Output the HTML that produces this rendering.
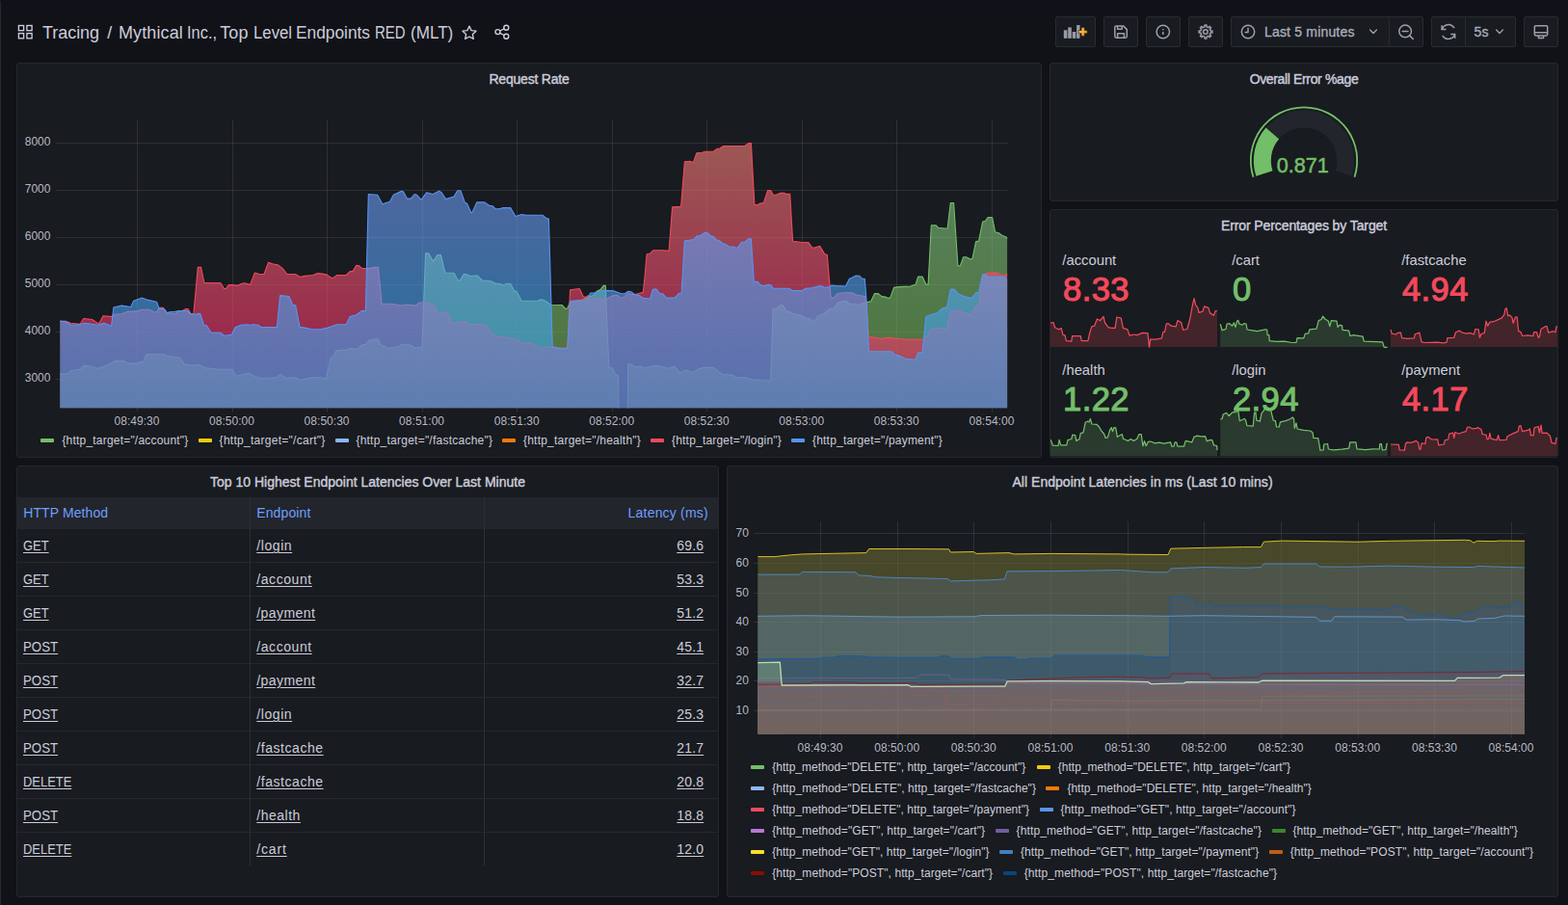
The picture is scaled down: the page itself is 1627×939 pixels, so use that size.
<!DOCTYPE html>
<html lang="en"><head><meta charset="utf-8"><title>Mythical Inc., Top Level Endpoints RED (MLT) - Grafana</title>
<style>
html,body{margin:0;padding:0}
body{width:1627px;height:939px;overflow:hidden;background:#111217;color:#ccccdc;font-family:"Liberation Sans",sans-serif;font-size:14px;position:relative}
.edge{position:absolute;left:0;top:1px;width:1px;height:938px;background:#25282f}
.edget{position:absolute;left:0;top:0;width:1627px;height:1px;background:#0e121d}
.panel{position:absolute;box-sizing:border-box;background:#181b1f;border:1px solid #25272c;border-radius:3px;overflow:hidden}
.ptitle{position:absolute;left:0;right:0;top:7px;height:18px;line-height:18px;text-align:center;font-size:14px;color:#ccccdc;letter-spacing:-.2px;white-space:nowrap;-webkit-text-stroke:.4px #ccccdc}
.chart{position:absolute;left:-1px;top:-1px}
.ax text{font-family:"Liberation Sans",sans-serif;font-size:12px;fill:#ccccdc;fill-opacity:.9;letter-spacing:.03px}
.dash{position:absolute;width:14px;height:4px;border-radius:1px}
.lg{position:absolute;font-size:12px;line-height:16px;white-space:nowrap;color:#ccccdc}
.tb{position:absolute;top:17px;height:32px;box-sizing:border-box;border:1px solid #292b30;border-radius:2px;background:#181b1f}
.tb svg{position:absolute}
.tbt{position:absolute;font-size:14px;color:#a9abbb;white-space:nowrap;line-height:30px;top:0;letter-spacing:.1px;-webkit-text-stroke:.35px #a9abbb}
.ttl{position:absolute;top:23px;font-size:18px;line-height:22px;color:#ccccdc;white-space:nowrap}
.stt{position:absolute;font-size:14.8px;line-height:17px;color:#ccccdc;white-space:nowrap}
.stv{position:absolute;font-size:34.5px;line-height:36px;letter-spacing:.4px;white-space:nowrap;-webkit-text-stroke:1.1px currentColor}
.th{position:absolute;font-size:14px;line-height:20px;color:#6e9fff;white-space:nowrap}
.td{position:absolute;font-size:14px;line-height:20px;color:#ccccdc;white-space:nowrap;text-decoration:underline;text-underline-offset:2px;text-decoration-thickness:1px}
.r{text-align:right}

</style></head>
<body>
<div class="edge"></div><div class="edget"></div>
<!-- page toolbar -->
<svg style="position:absolute;left:0;top:0" width="560" height="60" viewBox="0 0 560 60" fill="none" stroke="#ccccdc" stroke-width="1.35" stroke-linejoin="round" stroke-linecap="round">
  <g stroke-linejoin="miter">
    <rect x="19.4" y="26.5" width="5.2" height="5.2"/><rect x="27.9" y="26.5" width="5.2" height="5.2"/>
    <rect x="19.4" y="34.6" width="5.2" height="5.2"/><rect x="27.9" y="34.6" width="5.2" height="5.2"/>
  </g>
  <path d="M487 27.1 L489.1 31.6 L494 32.2 L490.4 35.6 L491.3 40.4 L487 38 L482.7 40.4 L483.6 35.6 L480 32.2 L484.9 31.6 Z"/>
  <circle cx="525.3" cy="28.7" r="2.5"/><circle cx="516.5" cy="33.1" r="2.5"/><circle cx="525.3" cy="37.7" r="2.5"/>
  <path d="M518.8 32 L523 29.8 M518.8 34.3 L523 36.5"/>
</svg>
<div class="ttl" style="left:44px;letter-spacing:-.05px">Tracing</div>
<div class="ttl" style="left:111.5px"><span style="position:absolute;left:-0.2px">/</span> <span style="position:absolute;left:11.4px;letter-spacing:0.123px">Mythical</span> <span style="position:absolute;left:82.2px;display:inline-block;transform-origin:0 50%;transform:scaleX(0.9114)">Inc.,</span> <span style="position:absolute;left:116.8px;letter-spacing:0.060px">Top</span> <span style="position:absolute;left:151.2px;display:inline-block;transform-origin:0 50%;transform:scaleX(0.9319)">Level</span> <span style="position:absolute;left:195.7px;display:inline-block;transform-origin:0 50%;transform:scaleX(0.9618)">Endpoints</span> <span style="position:absolute;left:277.5px;display:inline-block;transform-origin:0 50%;transform:scaleX(0.8341)">RED</span> <span style="position:absolute;left:314.3px;display:inline-block;transform-origin:0 50%;transform:scaleX(0.9496)">(MLT)</span></div>

<div class="tb" style="left:1095px;width:42px">
  <svg style="left:7px;top:7px" width="26" height="16" viewBox="1103 25 26 16">
    <defs><linearGradient id="pl" x1="0" y1="0" x2="1" y2="1"><stop offset="0" stop-color="#ffd84a"/><stop offset="1" stop-color="#ff8418"/></linearGradient></defs>
    <rect x="1103.8" y="31.3" width="3.6" height="8.5" fill="#9a9ba8"/><rect x="1108.2" y="28.4" width="3.6" height="11.4" fill="#9a9ba8"/>
    <rect x="1112.7" y="33" width="3.6" height="6.8" fill="#9a9ba8"/><rect x="1117.1" y="26" width="3.4" height="13.8" fill="#9a9ba8"/>
    <path d="M1122.1 28.6h3.2v2.9h2.9v3.2h-2.9v2.9h-3.2v-2.9h-2.9v-3.2h2.9z" fill="url(#pl)" stroke="#181b1f" stroke-width=".6"/>
  </svg>
</div>
<div class="tb" style="left:1145px;width:36px">
  <svg style="left:9px;top:7px" width="16" height="16" viewBox="1155 25 16 16" fill="none" stroke="#9d9eab" stroke-width="1.5" stroke-linejoin="round">
    <path d="M1158.2 26.9h7.4l3.7 3.7v7.2a1.4 1.4 0 0 1-1.4 1.4h-9.7a1.4 1.4 0 0 1-1.4-1.4v-9.5a1.4 1.4 0 0 1 1.4-1.4z"/>
    <path d="M1159.6 27v3.3h4.6v-3.3M1159.6 39v-4.2h6.8v4.2"/>
  </svg>
</div>
<div class="tb" style="left:1189px;width:36px">
  <svg style="left:9px;top:7px" width="16" height="16" viewBox="1199 25 16 16" fill="none" stroke="#9d9eab" stroke-width="1.5" stroke-linecap="round">
    <circle cx="1206.8" cy="33" r="6.7"/><path d="M1206.8 33v3" stroke-linecap="butt"/><path d="M1206.8 30.1v1.2" stroke-linecap="butt"/>
  </svg>
</div>
<div class="tb" style="left:1233px;width:36px">
  <svg style="left:9px;top:7px" width="16" height="16" viewBox="-8 -8 16 16" fill="none" stroke="#9d9eab" stroke-width="1.5" stroke-linejoin="round">
    <circle cx="-.1" cy="0" r="2.3"/>
    <path d="M-1.06 -5.09 L-0.97 -6.93 L0.97 -6.93 L1.06 -5.09 L2.85 -4.35 L4.22 -5.59 L5.59 -4.22 L4.35 -2.85 L5.09 -1.06 L6.93 -0.97 L6.93 0.97 L5.09 1.06 L4.35 2.85 L5.59 4.22 L4.22 5.59 L2.85 4.35 L1.06 5.09 L0.97 6.93 L-0.97 6.93 L-1.06 5.09 L-2.85 4.35 L-4.22 5.59 L-5.59 4.22 L-4.35 2.85 L-5.09 1.06 L-6.93 0.97 L-6.93 -0.97 L-5.09 -1.06 L-4.35 -2.85 L-5.59 -4.22 L-4.22 -5.59 L-2.85 -4.35 Z"/>
  </svg>
</div>
<div class="tb" style="left:1277px;width:165px;border-radius:2px 0 0 2px">
  <svg style="left:9px;top:7px" width="16" height="16" viewBox="1287 25 16 16" fill="none" stroke="#9d9eab" stroke-width="1.5" stroke-linecap="round" stroke-linejoin="round">
    <circle cx="1295" cy="33" r="6.7"/><path d="M1295 29.2v4.2h-2.9"/>
  </svg>
  <span class="tbt" style="left:34px;letter-spacing:.18px">Last 5 minutes</span>
  <svg style="left:142px;top:11px" width="10" height="8" viewBox="0 0 10 8" fill="none" stroke="#9a9ba8" stroke-width="1.4" stroke-linecap="round" stroke-linejoin="round"><path d="M1.6 2l3.4 3.4L8.400 2"/></svg>
</div>
<div class="tb" style="left:1441px;width:36px;border-radius:0 2px 2px 0">
  <svg style="left:8px;top:6px" width="19" height="19" viewBox="1450 24 19 19" fill="none" stroke="#9d9eab" stroke-width="1.5" stroke-linecap="round">
    <circle cx="1458.1" cy="32.4" r="6.3"/><path d="M1455.200 32.4h5.800M1462.700 37l3.500 3.400"/>
  </svg>
</div>
<div class="tb" style="left:1485px;width:36px;border-radius:2px 0 0 2px">
  <svg style="left:8px;top:6px" width="18" height="18" viewBox="1494 24 18 18" fill="none" stroke="#9d9eab" stroke-width="1.5" stroke-linecap="round" stroke-linejoin="round">
    <path d="M1496.300 30.500a6.900 6.900 0 0 1 12.400-1.800M1509.500 35.500a6.900 6.900 0 0 1-12.400 1.800"/>
    <path d="M1496.100 26.700v3.900h3.900M1509.700 39.300v-3.900h-3.900"/>
  </svg>
</div>
<div class="tb" style="left:1520px;width:53px;border-radius:0 2px 2px 0">
  <span class="tbt" style="left:8.500px">5s</span>
  <svg style="left:30px;top:11px" width="10" height="8" viewBox="0 0 10 8" fill="none" stroke="#9a9ba8" stroke-width="1.4" stroke-linecap="round" stroke-linejoin="round"><path d="M1.600 2l3.400 3.400L8.400 2"/></svg>
</div>
<div class="tb" style="left:1581px;width:36px">
  <svg style="left:8px;top:7px" width="17" height="17" viewBox="1590 25 17 17" fill="none" stroke="#9d9eab" stroke-width="1.5" stroke-linejoin="round">
    <rect x="1592.300" y="26.700" width="13.400" height="10.200" rx="1.300"/><path d="M1592.300 33.800h13.400M1596.400 37v2.400h5.200v-2.400"/>
  </svg>
</div>
<div class="panel" style="left:17px;top:65px;width:1064px;height:410px"><div class="ptitle">Request Rate</div><svg class="chart" width="1064" height="410" viewBox="17 65 1064 410"><defs><linearGradient id="hg" gradientUnits="userSpaceOnUse" x1="0" y1="124" x2="0" y2="423.5"><stop offset="0" stop-color="rgb(141,206,150)" stop-opacity=".6"/><stop offset="1" stop-color="rgb(109,172,73)" stop-opacity=".6"/></linearGradient><linearGradient id="hr" gradientUnits="userSpaceOnUse" x1="0" y1="124" x2="0" y2="423.5"><stop offset="0" stop-color="rgb(245,138,121)" stop-opacity=".6"/><stop offset="1" stop-color="rgb(239,25,103)" stop-opacity=".6"/></linearGradient><linearGradient id="hp" gradientUnits="userSpaceOnUse" x1="0" y1="124" x2="0" y2="423.5"><stop offset="0" stop-color="rgb(134,150,246)" stop-opacity=".6"/><stop offset="1" stop-color="rgb(40,168,238)" stop-opacity=".6"/></linearGradient><clipPath id="c1"><rect x="62" y="124" width="983.6" height="299.5"/></clipPath></defs><path d="M142.5 124 V427.5 M241.5 124 V427.5 M339.5 124 V427.5 M438.5 124 V427.5 M536.5 124 V427.5 M635.5 124 V427.5 M733.5 124 V427.5 M832.5 124 V427.5 M930.5 124 V427.5 M1029.5 124 V427.5 M58 393.5 H1045.6 M58 344.5 H1045.6 M58 295.5 H1045.6 M58 246.5 H1045.6 M58 197.5 H1045.6 M58 148.5 H1045.6" stroke="#ccccdc" stroke-opacity=".12" stroke-width="1" fill="none"/><g clip-path="url(#c1)" stroke-linejoin="round"><path d="M62.3 388.1 L69.6 388.1 L73.4 384.8 L83 383.3 L86.8 379.4 L95.5 380.4 L101.2 382.3 L107.9 380.4 L114.7 377.1 L119.4 374.6 L129 374.6 L132.9 377.1 L142.5 377.1 L145.3 375.6 L148.6 375.6 L152 367.5 L169.3 367.5 L173.1 369.3 L186.6 371.2 L191.4 378.1 L200 379.4 L206.7 378.5 L211.5 381.4 L224.9 383.3 L241.2 383.3 L245 390.6 L250 389 L258.6 387.1 L263.4 390 L270.1 392.3 L278.8 392.3 L287.4 391.3 L291.2 388.1 L297 392.3 L305.6 391.5 L311.4 394.2 L322.9 391.9 L332.5 391.5 L338.2 392.9 L343.4 371.2 L345.9 370.8 L348.8 363.7 L358.3 363.1 L363.1 361.6 L370.8 362.2 L375.6 357.8 L379.4 357.4 L383.3 353 L391.9 351.6 L395.7 358 L402.4 361.2 L413 359.9 L415.9 357.8 L425.5 357.8 L429.3 360.3 L437.9 360.8 L441.6 262.8 L444.6 262.8 L449.7 271.3 L453.8 264.6 L457.4 264.6 L462 283.3 L471 283.3 L475.3 291 L477.3 291 L481.2 284.6 L483.7 284.6 L487.6 286.6 L495.2 285.8 L500.4 291 L509.3 291.7 L514.4 294.3 L518.2 294.3 L522.1 296.1 L525.9 294.3 L529.7 294.3 L533.6 301.9 L536.1 302.5 L541.2 312.2 L557.9 312.2 L560.4 310.9 L564.2 311.4 L565.8 312.3 L571.5 316.2 L583 316.5 L586.8 320.4 L588.8 320 L591.6 313.3 L604.1 311 L610.2 308.5 L615.6 306.6 L619.4 302.2 L623.3 300.2 L626.2 296.4 L628.3 296.4 L629.4 326.7 L631.9 381.4 L635.7 382.3 L638.6 389 L641.5 389 L641.9 427.4 L651.3 427.4 L651.7 377.5 L654.9 378.1 L658.8 380.8 L664.5 380 L669.3 381.9 L675.1 380.4 L679.8 379.4 L686.6 380.4 L692.3 382.3 L700 380.4 L705.7 387.1 L711.5 384.2 L719.2 386.1 L724.9 382.7 L730.7 381.4 L740.2 381.4 L750 388.6 L759.6 389 L763.4 391.5 L773 391.5 L782.6 394.2 L791.2 394.2 L797.9 395.3 L799.5 395.3 L802.2 320.6 L805.6 320.6 L809.4 316.7 L812.3 316.7 L816.2 323.4 L819 323.4 L823.8 325.7 L832.5 327.7 L836.3 330.5 L839.2 330.5 L844 333.4 L845.9 332.5 L848.8 327.7 L854.5 325.7 L861.2 320.6 L865.1 320 L868.9 314.2 L872.7 313.3 L877.5 312.3 L881.4 315.2 L890.9 316.2 L894.8 314.8 L899.2 313.7 L903.8 312.6 L907.5 304.6 L911.3 304.6 L915 307.6 L918.8 308.1 L921.3 309.4 L923.8 308.9 L927.5 298.4 L932.5 297.6 L945 297.1 L950.1 295.1 L952.6 287.1 L957.1 287.1 L960.8 295.1 L963.1 295.1 L966.3 233.8 L971.3 233.8 L973.8 236.3 L980.1 237 L983.1 237 L986.3 210.5 L989.6 210.5 L993.9 275.8 L996.4 275.8 L999.6 266.8 L1002.6 266.8 L1006.4 268.8 L1008.9 268.8 L1012.6 250.6 L1015.6 250.1 L1019.6 230 L1022.1 229.5 L1025.1 225.5 L1029.6 225.5 L1032.6 240.8 L1036.4 241.8 L1040.2 244.6 L1043.9 245.8 L1045.2 247.6 L1045.2 423.5 L62.3 423.5 Z" fill="url(#hg)"/><path d="M62.3 388.1 L69.6 388.1 L73.4 384.8 L83 383.3 L86.8 379.4 L95.5 380.4 L101.2 382.3 L107.9 380.4 L114.7 377.1 L119.4 374.6 L129 374.6 L132.9 377.1 L142.5 377.1 L145.3 375.6 L148.6 375.6 L152 367.5 L169.3 367.5 L173.1 369.3 L186.6 371.2 L191.4 378.1 L200 379.4 L206.7 378.5 L211.5 381.4 L224.9 383.3 L241.2 383.3 L245 390.6 L250 389 L258.6 387.1 L263.4 390 L270.1 392.3 L278.8 392.3 L287.4 391.3 L291.2 388.1 L297 392.3 L305.6 391.5 L311.4 394.2 L322.9 391.9 L332.5 391.5 L338.2 392.9 L343.4 371.2 L345.9 370.8 L348.8 363.7 L358.3 363.1 L363.1 361.6 L370.8 362.2 L375.6 357.8 L379.4 357.4 L383.3 353 L391.9 351.6 L395.7 358 L402.4 361.2 L413 359.9 L415.9 357.8 L425.5 357.8 L429.3 360.3 L437.9 360.8 L441.6 262.8 L444.6 262.8 L449.7 271.3 L453.8 264.6 L457.4 264.6 L462 283.3 L471 283.3 L475.3 291 L477.3 291 L481.2 284.6 L483.7 284.6 L487.6 286.6 L495.2 285.8 L500.4 291 L509.3 291.7 L514.4 294.3 L518.2 294.3 L522.1 296.1 L525.9 294.3 L529.7 294.3 L533.6 301.9 L536.1 302.5 L541.2 312.2 L557.9 312.2 L560.4 310.9 L564.2 311.4 L565.8 312.3 L571.5 316.2 L583 316.5 L586.8 320.4 L588.8 320 L591.6 313.3 L604.1 311 L610.2 308.5 L615.6 306.6 L619.4 302.2 L623.3 300.2 L626.2 296.4 L628.3 296.4 L629.4 326.7 L631.9 381.4 L635.7 382.3 L638.6 389 L641.5 389 L641.9 427.4 L651.3 427.4 L651.7 377.5 L654.9 378.1 L658.8 380.8 L664.5 380 L669.3 381.9 L675.1 380.4 L679.8 379.4 L686.6 380.4 L692.3 382.3 L700 380.4 L705.7 387.1 L711.5 384.2 L719.2 386.1 L724.9 382.7 L730.7 381.4 L740.2 381.4 L750 388.6 L759.6 389 L763.4 391.5 L773 391.5 L782.6 394.2 L791.2 394.2 L797.9 395.3 L799.5 395.3 L802.2 320.6 L805.6 320.6 L809.4 316.7 L812.3 316.7 L816.2 323.4 L819 323.4 L823.8 325.7 L832.5 327.7 L836.3 330.5 L839.2 330.5 L844 333.4 L845.9 332.5 L848.8 327.7 L854.5 325.7 L861.2 320.6 L865.1 320 L868.9 314.2 L872.7 313.3 L877.5 312.3 L881.4 315.2 L890.9 316.2 L894.8 314.8 L899.2 313.7 L903.8 312.6 L907.5 304.6 L911.3 304.6 L915 307.6 L918.8 308.1 L921.3 309.4 L923.8 308.9 L927.5 298.4 L932.5 297.6 L945 297.1 L950.1 295.1 L952.6 287.1 L957.1 287.1 L960.8 295.1 L963.1 295.1 L966.3 233.8 L971.3 233.8 L973.8 236.3 L980.1 237 L983.1 237 L986.3 210.5 L989.6 210.5 L993.9 275.8 L996.4 275.8 L999.6 266.8 L1002.6 266.8 L1006.4 268.8 L1008.9 268.8 L1012.6 250.6 L1015.6 250.1 L1019.6 230 L1022.1 229.5 L1025.1 225.5 L1029.6 225.5 L1032.6 240.8 L1036.4 241.8 L1040.2 244.6 L1043.9 245.8 L1045.2 247.6" fill="none" stroke="#73BF69" stroke-width="1.1"/><path d="M62.3 333 L68.6 333.4 L73.4 335.3 L83 336.3 L86.8 330.5 L95.5 331.5 L101.2 335.3 L103.1 335.3 L107 327.7 L116.6 328.6 L117.5 326.3 L126.2 325.7 L131.9 323.4 L142.5 322.9 L146.3 321.3 L154.9 321.3 L159.7 323.8 L162.6 323.8 L165.5 319.4 L169.3 319.4 L173.1 324.8 L182.7 325.7 L184.6 322.5 L189.4 322.5 L192.3 320.6 L195.2 320.6 L198.1 325.7 L200.9 325.7 L205.3 277.4 L208.6 277.4 L211.9 293.5 L228.7 293.5 L232.6 299.5 L234.5 299.5 L237.4 295.6 L242.2 295.6 L246 296.4 L250 294.5 L253.8 293.7 L259.6 295.4 L264.4 283 L269.2 284.5 L274 284.5 L278.4 272.4 L283.6 274 L288.4 274.9 L293.1 278.4 L297.9 284.5 L306.6 284.5 L311.4 287.4 L316.2 286.4 L324.8 285.5 L329.6 283.6 L334.4 284.1 L339.2 285.1 L344 288.4 L345.9 288.4 L349.7 285.5 L359.3 285.5 L363.1 281.6 L366 281.6 L369.8 275.3 L372.7 275.9 L375.6 278.4 L380.4 278.8 L389.2 277.4 L392.5 277.4 L396.1 315.2 L405.8 315.2 L416 317 L421.1 316 L431.3 317 L435.2 314 L444.1 314 L450.5 317 L454.3 325.5 L459.5 324.7 L464.6 324.7 L468.4 335.2 L482.5 333.6 L487.6 336.5 L500.4 336.5 L504.2 338.2 L510.6 345.9 L514.4 349.2 L523.4 349.7 L536.1 352.3 L541.2 355.6 L551.5 356.1 L560.4 361.2 L569.4 360 L573.4 359.7 L581.1 361.2 L588.8 360.8 L591.6 300.8 L601.2 299.5 L605.1 307.5 L607.9 308.5 L610.2 306.6 L612.7 311.4 L617.5 309.4 L627.1 310.4 L630 309.4 L636.7 306.6 L640.5 306.2 L645.3 309.4 L649.2 306.6 L652 304.3 L655.9 305.6 L659.7 305.2 L667.4 303.3 L669.3 284.5 L671.1 263.7 L674 263.3 L677.8 259.8 L688.4 259.8 L694.1 260.4 L697.6 214.8 L706.6 214.4 L710.4 167.8 L716.2 167.4 L719.4 168.4 L722.9 158.8 L728.6 158.2 L731.5 157.3 L740.1 157.3 L744 154.4 L746.8 154 L750.7 151.5 L772.7 151.5 L776.6 148.6 L779.4 148.6 L782.9 212.5 L786.1 212.5 L789 210.9 L792.3 210.6 L796.7 197.5 L799.6 197.5 L802.4 202.3 L805.3 202.3 L809.2 200.4 L814 200.4 L815.9 201.4 L819.7 201.4 L822.6 250.3 L831.2 251.2 L838.9 251.6 L842.7 257 L845.6 257 L845.9 256.7 L850.7 255.4 L855.5 263.4 L858.3 264.4 L860.3 288.4 L862.2 309.1 L865.1 309.1 L868.9 304.7 L874.6 303.7 L884.2 303.7 L888.1 306 L897.7 307.5 L899.6 326.7 L901.5 349.3 L902 349.4 L910 350.7 L915 351.4 L922.5 350.2 L930 351.4 L940 352.2 L957.6 352.2 L960.8 349.4 L962.6 348.9 L966.3 340.7 L975.1 340.2 L982.6 341.4 L986.3 323.1 L995.1 322.1 L1000.1 324.6 L1007.6 326.9 L1012.1 318.1 L1015.6 317.6 L1019.6 287.6 L1023.9 283.1 L1035.1 283.1 L1038.9 285.6 L1042.7 285.6 L1045.2 283.8 L1045.2 423.5 L62.3 423.5 Z" fill="url(#hr)"/><path d="M62.3 333 L68.6 333.4 L73.4 335.3 L83 336.3 L86.8 330.5 L95.5 331.5 L101.2 335.3 L103.1 335.3 L107 327.7 L116.6 328.6 L117.5 326.3 L126.2 325.7 L131.9 323.4 L142.5 322.9 L146.3 321.3 L154.9 321.3 L159.7 323.8 L162.6 323.8 L165.5 319.4 L169.3 319.4 L173.1 324.8 L182.7 325.7 L184.6 322.5 L189.4 322.5 L192.3 320.6 L195.2 320.6 L198.1 325.7 L200.9 325.7 L205.3 277.4 L208.6 277.4 L211.9 293.5 L228.7 293.5 L232.6 299.5 L234.5 299.5 L237.4 295.6 L242.2 295.6 L246 296.4 L250 294.5 L253.8 293.7 L259.6 295.4 L264.4 283 L269.2 284.5 L274 284.5 L278.4 272.4 L283.6 274 L288.4 274.9 L293.1 278.4 L297.9 284.5 L306.6 284.5 L311.4 287.4 L316.2 286.4 L324.8 285.5 L329.6 283.6 L334.4 284.1 L339.2 285.1 L344 288.4 L345.9 288.4 L349.7 285.5 L359.3 285.5 L363.1 281.6 L366 281.6 L369.8 275.3 L372.7 275.9 L375.6 278.4 L380.4 278.8 L389.2 277.4 L392.5 277.4 L396.1 315.2 L405.8 315.2 L416 317 L421.1 316 L431.3 317 L435.2 314 L444.1 314 L450.5 317 L454.3 325.5 L459.5 324.7 L464.6 324.7 L468.4 335.2 L482.5 333.6 L487.6 336.5 L500.4 336.5 L504.2 338.2 L510.6 345.9 L514.4 349.2 L523.4 349.7 L536.1 352.3 L541.2 355.6 L551.5 356.1 L560.4 361.2 L569.4 360 L573.4 359.7 L581.1 361.2 L588.8 360.8 L591.6 300.8 L601.2 299.5 L605.1 307.5 L607.9 308.5 L610.2 306.6 L612.7 311.4 L617.5 309.4 L627.1 310.4 L630 309.4 L636.7 306.6 L640.5 306.2 L645.3 309.4 L649.2 306.6 L652 304.3 L655.9 305.6 L659.7 305.2 L667.4 303.3 L669.3 284.5 L671.1 263.7 L674 263.3 L677.8 259.8 L688.4 259.8 L694.1 260.4 L697.6 214.8 L706.6 214.4 L710.4 167.8 L716.2 167.4 L719.4 168.4 L722.9 158.8 L728.6 158.2 L731.5 157.3 L740.1 157.3 L744 154.4 L746.8 154 L750.7 151.5 L772.7 151.5 L776.6 148.6 L779.4 148.6 L782.9 212.5 L786.1 212.5 L789 210.9 L792.3 210.6 L796.7 197.5 L799.6 197.5 L802.4 202.3 L805.3 202.3 L809.2 200.4 L814 200.4 L815.9 201.4 L819.7 201.4 L822.6 250.3 L831.2 251.2 L838.9 251.6 L842.7 257 L845.6 257 L845.9 256.7 L850.7 255.4 L855.5 263.4 L858.3 264.4 L860.3 288.4 L862.2 309.1 L865.1 309.1 L868.9 304.7 L874.6 303.7 L884.2 303.7 L888.1 306 L897.7 307.5 L899.6 326.7 L901.5 349.3 L902 349.4 L910 350.7 L915 351.4 L922.5 350.2 L930 351.4 L940 352.2 L957.6 352.2 L960.8 349.4 L962.6 348.9 L966.3 340.7 L975.1 340.2 L982.6 341.4 L986.3 323.1 L995.1 322.1 L1000.1 324.6 L1007.6 326.9 L1012.1 318.1 L1015.6 317.6 L1019.6 287.6 L1023.9 283.1 L1035.1 283.1 L1038.9 285.6 L1042.7 285.6 L1045.2 283.8" fill="none" stroke="#F2495C" stroke-width="1.1"/><path d="M62.3 333.4 L68.6 333.8 L73.4 337.2 L83 336.9 L87.8 335.3 L95.5 336.3 L101.2 337.2 L107.9 335.3 L111.8 336.7 L115.6 338.2 L117.9 319 L126.2 317.1 L135.7 318.5 L138.6 312.3 L147.2 309.1 L154 311.4 L162.6 313.3 L165.1 320 L170.3 320.6 L174.1 325.4 L175.1 323.8 L182.7 323.4 L184.6 322.5 L194.2 322.5 L198.1 325.7 L201.9 326.3 L207.7 325.4 L211.5 337.2 L214.4 337.8 L219.2 345.3 L228.7 345.3 L232.6 348.2 L240.2 347.4 L244.1 339.7 L250 337.2 L255.8 336.7 L259.6 337.2 L263.4 336.7 L268.2 337.2 L270.7 339.5 L287.4 339.5 L290.7 306.6 L299.9 307.5 L303.7 316.2 L306.6 316.7 L311 339.2 L316.2 340.1 L323.8 341.7 L332.5 341.7 L340.1 340.1 L349.7 336.7 L359.3 336.7 L363.1 328.6 L369.8 326.7 L375.6 322.5 L379.4 322.5 L382.3 201.5 L391.7 202.3 L396.8 211.7 L404.5 209.2 L408.3 202.3 L416 198.4 L418.6 198.9 L422.4 206.1 L426.2 206.1 L430.1 201.5 L432.6 202.3 L437 207.4 L442.8 199.7 L449.2 201.5 L455.6 198.2 L458.2 199.7 L462.5 206.6 L468.4 204.8 L471 204.1 L474.8 197.7 L477.9 197.7 L482.5 210.4 L484.5 211 L488.8 220.7 L490.1 220.2 L494.7 209.9 L502.9 209.9 L508 213.5 L510.6 213.5 L514.4 216.8 L518.2 216.8 L522.1 215.6 L529.7 215.6 L534.9 224.5 L541.2 222.5 L546.4 223.2 L563 223.2 L566.8 226.5 L569.4 227.1 L573.2 358.7 L573.4 360.3 L581.1 361.6 L588.8 361.2 L591.6 312.3 L606 311.7 L610.2 309.4 L612.7 304.1 L617.5 303.7 L623.3 301.8 L629 301.4 L636.7 301.8 L644.4 304.7 L648.2 304.7 L652 302.2 L654.9 302.7 L658.8 305.6 L663.5 306.6 L667.4 309.4 L674.7 310 L677.4 300.2 L680.8 299.9 L684.6 304.7 L687.5 304.7 L691.4 309.1 L700 309.1 L704.7 304.5 L707.1 304 L710.4 249.9 L715.2 249.3 L720 248.3 L722.9 245.1 L726.7 244.5 L731.5 241.2 L733.4 241.2 L738.2 245.1 L740.1 245.5 L744 249.3 L745.9 249.3 L750.7 253.1 L752.6 253.1 L756.4 256 L761.2 256 L765.1 257.4 L769.8 251.2 L772.7 251.2 L776.6 247.8 L779.4 247.8 L782.3 292.4 L786.1 292.4 L790 296.3 L793.8 296.3 L797.7 295.3 L799.6 295.7 L802.4 299.2 L818.7 299.2 L822.6 301.6 L832.2 301.6 L836 299.2 L841.8 298.8 L851.6 296.6 L855.5 298.3 L860.3 297.9 L863.1 296 L867 296.6 L877.5 297 L881.4 289.3 L884.2 288 L888.1 286 L891.9 286.4 L894.8 289.3 L897.3 289.3 L899.2 313.3 L901.5 364.5 L902 364.7 L925 364.7 L928 367.7 L932.5 368.9 L936.3 370.7 L940 372.2 L945 372.7 L949.6 373.2 L953.1 365.7 L957.1 365.2 L960.8 328.4 L966.3 326.4 L972.6 324.4 L977.6 320.1 L982.6 318.9 L986.3 300.1 L990.1 300.1 L993.9 304.4 L998.9 307.1 L1005.1 308.9 L1008.9 308.9 L1012.6 303.9 L1015.6 303.4 L1019.6 284.6 L1022.6 284.6 L1025.1 287.1 L1042.7 287.6 L1045.2 291.4 L1045.2 423.5 L62.3 423.5 Z" fill="url(#hp)"/><path d="M62.3 333.4 L68.6 333.8 L73.4 337.2 L83 336.9 L87.8 335.3 L95.5 336.3 L101.2 337.2 L107.9 335.3 L111.8 336.7 L115.6 338.2 L117.9 319 L126.2 317.1 L135.7 318.5 L138.6 312.3 L147.2 309.1 L154 311.4 L162.6 313.3 L165.1 320 L170.3 320.6 L174.1 325.4 L175.1 323.8 L182.7 323.4 L184.6 322.5 L194.2 322.5 L198.1 325.7 L201.9 326.3 L207.7 325.4 L211.5 337.2 L214.4 337.8 L219.2 345.3 L228.7 345.3 L232.6 348.2 L240.2 347.4 L244.1 339.7 L250 337.2 L255.8 336.7 L259.6 337.2 L263.4 336.7 L268.2 337.2 L270.7 339.5 L287.4 339.5 L290.7 306.6 L299.9 307.5 L303.7 316.2 L306.6 316.7 L311 339.2 L316.2 340.1 L323.8 341.7 L332.5 341.7 L340.1 340.1 L349.7 336.7 L359.3 336.7 L363.1 328.6 L369.8 326.7 L375.6 322.5 L379.4 322.5 L382.3 201.5 L391.7 202.3 L396.8 211.7 L404.5 209.2 L408.3 202.3 L416 198.4 L418.6 198.9 L422.4 206.1 L426.2 206.1 L430.1 201.5 L432.6 202.3 L437 207.4 L442.8 199.7 L449.2 201.5 L455.6 198.2 L458.2 199.7 L462.5 206.6 L468.4 204.8 L471 204.1 L474.8 197.7 L477.9 197.7 L482.5 210.4 L484.5 211 L488.8 220.7 L490.1 220.2 L494.7 209.9 L502.9 209.9 L508 213.5 L510.6 213.5 L514.4 216.8 L518.2 216.8 L522.1 215.6 L529.7 215.6 L534.9 224.5 L541.2 222.5 L546.4 223.2 L563 223.2 L566.8 226.5 L569.4 227.1 L573.2 358.7 L573.4 360.3 L581.1 361.6 L588.8 361.2 L591.6 312.3 L606 311.7 L610.2 309.4 L612.7 304.1 L617.5 303.7 L623.3 301.8 L629 301.4 L636.7 301.8 L644.4 304.7 L648.2 304.7 L652 302.2 L654.9 302.7 L658.8 305.6 L663.5 306.6 L667.4 309.4 L674.7 310 L677.4 300.2 L680.8 299.9 L684.6 304.7 L687.5 304.7 L691.4 309.1 L700 309.1 L704.7 304.5 L707.1 304 L710.4 249.9 L715.2 249.3 L720 248.3 L722.9 245.1 L726.7 244.5 L731.5 241.2 L733.4 241.2 L738.2 245.1 L740.1 245.5 L744 249.3 L745.9 249.3 L750.7 253.1 L752.6 253.1 L756.4 256 L761.2 256 L765.1 257.4 L769.8 251.2 L772.7 251.2 L776.6 247.8 L779.4 247.8 L782.3 292.4 L786.1 292.4 L790 296.3 L793.8 296.3 L797.7 295.3 L799.6 295.7 L802.4 299.2 L818.7 299.2 L822.6 301.6 L832.2 301.6 L836 299.2 L841.8 298.8 L851.6 296.6 L855.5 298.3 L860.3 297.9 L863.1 296 L867 296.6 L877.5 297 L881.4 289.3 L884.2 288 L888.1 286 L891.9 286.4 L894.8 289.3 L897.3 289.3 L899.2 313.3 L901.5 364.5 L902 364.7 L925 364.7 L928 367.7 L932.5 368.9 L936.3 370.7 L940 372.2 L945 372.7 L949.6 373.2 L953.1 365.7 L957.1 365.2 L960.8 328.4 L966.3 326.4 L972.6 324.4 L977.6 320.1 L982.6 318.9 L986.3 300.1 L990.1 300.1 L993.9 304.4 L998.9 307.1 L1005.1 308.9 L1008.9 308.9 L1012.6 303.9 L1015.6 303.4 L1019.6 284.6 L1022.6 284.6 L1025.1 287.1 L1042.7 287.6 L1045.2 291.4" fill="none" stroke="#5794F2" stroke-width="1.1"/></g><g class="ax"><text x="52.5" y="396.4" text-anchor="end">3000</text><text x="52.5" y="347.4" text-anchor="end">4000</text><text x="52.5" y="298.4" text-anchor="end">5000</text><text x="52.5" y="249.4" text-anchor="end">6000</text><text x="52.5" y="200.4" text-anchor="end">7000</text><text x="52.5" y="151.4" text-anchor="end">8000</text><text x="142" y="441" text-anchor="middle">08:49:30</text><text x="240.5" y="441" text-anchor="middle">08:50:00</text><text x="339.1" y="441" text-anchor="middle">08:50:30</text><text x="437.6" y="441" text-anchor="middle">08:51:00</text><text x="536.2" y="441" text-anchor="middle">08:51:30</text><text x="634.7" y="441" text-anchor="middle">08:52:00</text><text x="733.2" y="441" text-anchor="middle">08:52:30</text><text x="831.8" y="441" text-anchor="middle">08:53:00</text><text x="930.3" y="441" text-anchor="middle">08:53:30</text><text x="1028.9" y="441" text-anchor="middle">08:54:00</text></g></svg><i class="dash" style="left:24px;top:389px;background:#73BF69"></i><span class="lg" style="left:46.4px;top:382.5px;letter-spacing:0.201px">{http_target=&quot;/account&quot;}</span><i class="dash" style="left:187.7px;top:389px;background:#F2CC0C"></i><span class="lg" style="left:209.6px;top:382.5px;letter-spacing:0.274px">{http_target=&quot;/cart&quot;}</span><i class="dash" style="left:330px;top:389px;background:#8AB8FF"></i><span class="lg" style="left:351.4px;top:382.5px;letter-spacing:0.238px">{http_target=&quot;/fastcache&quot;}</span><i class="dash" style="left:503px;top:389px;background:#FF780A"></i><span class="lg" style="left:525px;top:382.5px;letter-spacing:0.220px">{http_target=&quot;/health&quot;}</span><i class="dash" style="left:657px;top:389px;background:#F2495C"></i><span class="lg" style="left:679px;top:382.5px;letter-spacing:0.200px">{http_target=&quot;/login&quot;}</span><i class="dash" style="left:803px;top:389px;background:#5794F2"></i><span class="lg" style="left:825px;top:382.5px;letter-spacing:0.197px">{http_target=&quot;/payment&quot;}</span></div>
<div class="panel" style="left:1089px;top:65px;width:528px;height:144px"><div class="ptitle" style="letter-spacing:-.35px">Overall Error %age</div><svg class="chart" width="528" height="144" viewBox="1089 65 528 144"><path d="M1303.35 182.73 A52.2 52.2 0 1 1 1402.65 182.73 L1385.53 177.17 A34.2 34.2 0 1 0 1320.47 177.17 Z" fill="#22252b"/><path d="M1303.35 182.73 A52.2 52.2 0 0 1 1313.48 132.49 L1327.11 144.25 A34.2 34.2 0 0 0 1320.47 177.17 Z" fill="#73bf69"/><path d="M1299.65 183.94 A56.1 56.1 0 1 1 1406.35 183.94 L1404.64 183.38 A54.3 54.3 0 1 0 1301.36 183.38 Z" fill="#73bf69"/><text x="1351.8" y="179.3" text-anchor="middle" font-family="Liberation Sans,sans-serif" font-size="21.6" fill="#73bf69" stroke="#73bf69" stroke-width=".5">0.871</text></svg></div>
<div class="panel" style="left:1089px;top:217px;width:528px;height:258px"><div class="ptitle" style="letter-spacing:-.1px">Error Percentages by Target</div><svg class="chart" width="528" height="258" viewBox="1089 217 528 258" stroke-linejoin="round"><path d="M1090 335.2 L1093 334.5 L1094.6 339.8 L1098.5 341.8 L1101.3 340.7 L1102.9 347.4 L1105.1 347.8 L1106.3 353.7 L1111.8 354.2 L1112.6 348.7 L1121.2 348.5 L1122.3 353.7 L1128.9 353.7 L1130.6 345.9 L1132.8 338.9 L1135.6 338.2 L1138.3 331 L1141.7 332.6 L1145 328.5 L1146.6 335.2 L1150 339.6 L1153.3 340.4 L1157.1 340.4 L1158.8 329 L1163.2 330.1 L1165.4 340.4 L1169.9 341.8 L1172.1 348.1 L1176.5 347 L1179.8 347.6 L1185.4 345.4 L1190.9 345.6 L1192.5 360.3 L1193.7 352 L1198.6 352.2 L1205.3 351.1 L1206.9 344.3 L1208.6 344.3 L1210.2 336 L1211.9 335.6 L1215.2 338.2 L1220.2 338.9 L1221.9 332.6 L1225.7 334.5 L1227.6 342.3 L1231.8 341.5 L1234.6 331.5 L1237.4 316.6 L1239 309.7 L1240.7 316.6 L1242.9 319.4 L1244 324.3 L1247.9 323.2 L1249.5 317.9 L1253.9 319.4 L1255.6 324.9 L1259.5 327.1 L1261.1 322.7 L1263 322.5 L1263 360.1 L1090 360.1 Z" fill="#42242a"/><path d="M1090 335.2 L1093 334.5 L1094.6 339.8 L1098.5 341.8 L1101.3 340.7 L1102.9 347.4 L1105.1 347.8 L1106.3 353.7 L1111.8 354.2 L1112.6 348.7 L1121.2 348.5 L1122.3 353.7 L1128.9 353.7 L1130.6 345.9 L1132.8 338.9 L1135.6 338.2 L1138.3 331 L1141.7 332.6 L1145 328.5 L1146.6 335.2 L1150 339.6 L1153.3 340.4 L1157.1 340.4 L1158.8 329 L1163.2 330.1 L1165.4 340.4 L1169.9 341.8 L1172.1 348.1 L1176.5 347 L1179.8 347.6 L1185.4 345.4 L1190.9 345.6 L1192.5 360.3 L1193.7 352 L1198.6 352.2 L1205.3 351.1 L1206.9 344.3 L1208.6 344.3 L1210.2 336 L1211.9 335.6 L1215.2 338.2 L1220.2 338.9 L1221.9 332.6 L1225.7 334.5 L1227.6 342.3 L1231.8 341.5 L1234.6 331.5 L1237.4 316.6 L1239 309.7 L1240.7 316.6 L1242.9 319.4 L1244 324.3 L1247.9 323.2 L1249.5 317.9 L1253.9 319.4 L1255.6 324.9 L1259.5 327.1 L1261.1 322.7 L1263 322.5" fill="none" stroke="#f2495c" stroke-width="1.25"/><path d="M1266.2 336.3 L1268.1 342.6 L1272 341.5 L1273.1 336 L1275.8 335.6 L1278.6 338.2 L1280.3 334.8 L1281.9 339.3 L1283.6 333.2 L1284.7 332.3 L1285.8 336 L1289.1 337.1 L1290.8 335.6 L1293 336 L1294.1 342 L1299.6 342.9 L1304.6 343.7 L1312.9 341.8 L1314.6 342 L1315.1 347.4 L1316.8 347.6 L1317.3 353.7 L1324 354.4 L1332.8 354.2 L1340.5 355.5 L1345 355.3 L1346.1 350.7 L1352.7 350.9 L1354.4 346.2 L1357.7 346.2 L1358.8 341.8 L1366 341.2 L1368.2 332.6 L1371 331.5 L1372.6 328.2 L1374.8 331 L1378.2 333 L1379.8 338.7 L1381.3 332.6 L1387 333.2 L1388.1 339.3 L1389.8 337.4 L1392.5 337.6 L1393.1 342.3 L1399.7 343.1 L1400.8 348.5 L1404.2 347.6 L1414.1 349.2 L1415.2 354.2 L1434.6 354.8 L1436.2 360.3 L1439.6 360.3 L1439.6 360.1 L1266.2 360.1 Z" fill="#2a3a2e"/><path d="M1266.2 336.3 L1268.1 342.6 L1272 341.5 L1273.1 336 L1275.8 335.6 L1278.6 338.2 L1280.3 334.8 L1281.9 339.3 L1283.6 333.2 L1284.7 332.3 L1285.8 336 L1289.1 337.1 L1290.8 335.6 L1293 336 L1294.1 342 L1299.6 342.9 L1304.6 343.7 L1312.9 341.8 L1314.6 342 L1315.1 347.4 L1316.8 347.6 L1317.3 353.7 L1324 354.4 L1332.8 354.2 L1340.5 355.5 L1345 355.3 L1346.1 350.7 L1352.7 350.9 L1354.4 346.2 L1357.7 346.2 L1358.8 341.8 L1366 341.2 L1368.2 332.6 L1371 331.5 L1372.6 328.2 L1374.8 331 L1378.2 333 L1379.8 338.7 L1381.3 332.6 L1387 333.2 L1388.1 339.3 L1389.8 337.4 L1392.5 337.6 L1393.1 342.3 L1399.7 343.1 L1400.8 348.5 L1404.2 347.6 L1414.1 349.2 L1415.2 354.2 L1434.6 354.8 L1436.2 360.3 L1439.6 360.3" fill="none" stroke="#73bf69" stroke-width="1.25"/><path d="M1443 342 L1444.1 346.2 L1448.5 347 L1450.2 345.4 L1453.5 345.1 L1454.6 350.7 L1460.1 351.4 L1467.3 350.9 L1468.4 346.5 L1470.1 346.2 L1472.8 345.1 L1475.1 354.8 L1478.9 355.5 L1491.1 355.1 L1497.7 355.9 L1501.1 355.1 L1501.9 350.7 L1508.8 350.3 L1510.5 344.8 L1514.3 343.1 L1517.1 345.1 L1522.1 346.2 L1525.4 345.4 L1529.3 347 L1530.9 341.5 L1534.2 341.8 L1535.4 350.3 L1537 346.5 L1540.3 345.4 L1542 333.2 L1543.7 338.2 L1545.9 334.1 L1549.7 333.7 L1558 330.1 L1560.8 326.6 L1561.9 320.5 L1563.2 319.7 L1564.7 327.7 L1566.9 327.1 L1569.1 329.9 L1570.2 335.4 L1572.4 329 L1574.1 328.8 L1575.7 343.7 L1577.9 344.3 L1579.6 348.5 L1585.1 347.8 L1590.7 348.7 L1591.8 344.5 L1594.5 344.5 L1596.2 350.3 L1597.3 349.8 L1599 341.5 L1603.9 338.5 L1605.1 338.7 L1606.7 345.1 L1611.7 343.7 L1613.9 344.8 L1615 338.9 L1615.9 338.7 L1615.9 360.1 L1443 360.1 Z" fill="#42242a"/><path d="M1443 342 L1444.1 346.2 L1448.5 347 L1450.2 345.4 L1453.5 345.1 L1454.6 350.7 L1460.1 351.4 L1467.3 350.9 L1468.4 346.5 L1470.1 346.2 L1472.8 345.1 L1475.1 354.8 L1478.9 355.5 L1491.1 355.1 L1497.7 355.9 L1501.1 355.1 L1501.9 350.7 L1508.8 350.3 L1510.5 344.8 L1514.3 343.1 L1517.1 345.1 L1522.1 346.2 L1525.4 345.4 L1529.3 347 L1530.9 341.5 L1534.2 341.8 L1535.4 350.3 L1537 346.5 L1540.3 345.4 L1542 333.2 L1543.7 338.2 L1545.9 334.1 L1549.7 333.7 L1558 330.1 L1560.8 326.6 L1561.9 320.5 L1563.2 319.7 L1564.7 327.7 L1566.9 327.1 L1569.1 329.9 L1570.2 335.4 L1572.4 329 L1574.1 328.8 L1575.7 343.7 L1577.9 344.3 L1579.6 348.5 L1585.1 347.8 L1590.7 348.7 L1591.8 344.5 L1594.5 344.5 L1596.2 350.3 L1597.3 349.8 L1599 341.5 L1603.9 338.5 L1605.1 338.7 L1606.7 345.1 L1611.7 343.7 L1613.9 344.8 L1615 338.9 L1615.9 338.7" fill="none" stroke="#f2495c" stroke-width="1.25"/><path d="M1090 456 L1092.4 462.1 L1098 462.5 L1099.1 456.3 L1100.7 461.8 L1106.8 461.8 L1107.9 456.6 L1111.8 455.5 L1112.9 451.1 L1115.7 451.6 L1116.8 457.4 L1120.1 455.5 L1121.2 449.6 L1124 448.8 L1126.2 438.3 L1128.4 437.2 L1130 437.8 L1131.4 434.5 L1132.8 440 L1137.8 440.3 L1140.6 443 L1142.8 447 L1145.5 450 L1147.2 454.4 L1149.4 453.8 L1151.6 446.1 L1153.3 443.6 L1154.4 447.7 L1156 443.6 L1157.7 443.9 L1159.4 453.3 L1164.3 450.5 L1165.4 455.2 L1170.4 457.4 L1173.2 455.5 L1176.5 457.4 L1179.8 455.2 L1182 450.5 L1184.2 450.5 L1185.9 462.7 L1187.6 457.7 L1189.2 462.7 L1191.4 458.3 L1193.7 458 L1198.6 459.9 L1203.1 459.1 L1207.5 460.2 L1214.7 458.8 L1215.8 463.2 L1218 463.2 L1219.1 458.8 L1220.8 458.8 L1221.9 463.2 L1228.5 463.2 L1230.2 457.4 L1236.8 458.8 L1239 453.3 L1242.3 452.2 L1246.2 452.9 L1250.6 452.7 L1252.3 457.7 L1256.2 456.3 L1257.8 456.6 L1259.5 461.8 L1262.6 462.5 L1263 467.1 L1263 473.3 L1090 473.3 Z" fill="#2a3a2e"/><path d="M1090 456 L1092.4 462.1 L1098 462.5 L1099.1 456.3 L1100.7 461.8 L1106.8 461.8 L1107.9 456.6 L1111.8 455.5 L1112.9 451.1 L1115.7 451.6 L1116.8 457.4 L1120.1 455.5 L1121.2 449.6 L1124 448.8 L1126.2 438.3 L1128.4 437.2 L1130 437.8 L1131.4 434.5 L1132.8 440 L1137.8 440.3 L1140.6 443 L1142.8 447 L1145.5 450 L1147.2 454.4 L1149.4 453.8 L1151.6 446.1 L1153.3 443.6 L1154.4 447.7 L1156 443.6 L1157.7 443.9 L1159.4 453.3 L1164.3 450.5 L1165.4 455.2 L1170.4 457.4 L1173.2 455.5 L1176.5 457.4 L1179.8 455.2 L1182 450.5 L1184.2 450.5 L1185.9 462.7 L1187.6 457.7 L1189.2 462.7 L1191.4 458.3 L1193.7 458 L1198.6 459.9 L1203.1 459.1 L1207.5 460.2 L1214.7 458.8 L1215.8 463.2 L1218 463.2 L1219.1 458.8 L1220.8 458.8 L1221.9 463.2 L1228.5 463.2 L1230.2 457.4 L1236.8 458.8 L1239 453.3 L1242.3 452.2 L1246.2 452.9 L1250.6 452.7 L1252.3 457.7 L1256.2 456.3 L1257.8 456.6 L1259.5 461.8 L1262.6 462.5 L1263 467.1" fill="none" stroke="#73bf69" stroke-width="1.25"/><path d="M1266.2 435 L1268.1 434.5 L1269.2 430 L1272.5 428.4 L1275.3 431.5 L1278.6 427.8 L1283 427.3 L1284.7 425.6 L1286.3 436.7 L1291.3 434.5 L1292.4 435.6 L1293.9 441.7 L1300.2 442.2 L1301.6 428.4 L1302.9 427.8 L1303.8 436.1 L1307.4 437.2 L1309 428.9 L1311.2 426.2 L1312.9 422.9 L1315.1 424.5 L1318.4 424.5 L1320.1 431.7 L1321.2 436.1 L1323.4 436.7 L1324.5 442.8 L1327.3 443 L1328.4 437.8 L1333.9 436.7 L1339.4 434.5 L1341.1 433 L1342.5 434.5 L1343.3 444.4 L1345 438.9 L1346.1 445 L1352.7 446.3 L1359.4 447 L1362.1 448.8 L1362.9 454.4 L1367.7 454.7 L1368.8 460.5 L1369.9 467.1 L1373.2 466.9 L1373.7 461 L1377.6 460.5 L1378.4 466 L1383.7 466.9 L1392.5 466.2 L1399.7 465.1 L1400.8 458.8 L1406.9 458.8 L1408 465.8 L1416.9 466.6 L1424.6 465.8 L1431.3 466 L1431.8 460.7 L1433.3 460.5 L1434.4 466.9 L1437.9 466.6 L1439 460.5 L1439.9 459.9 L1439.9 473.3 L1266.2 473.3 Z" fill="#2a3a2e"/><path d="M1266.2 435 L1268.1 434.5 L1269.2 430 L1272.5 428.4 L1275.3 431.5 L1278.6 427.8 L1283 427.3 L1284.7 425.6 L1286.3 436.7 L1291.3 434.5 L1292.4 435.6 L1293.9 441.7 L1300.2 442.2 L1301.6 428.4 L1302.9 427.8 L1303.8 436.1 L1307.4 437.2 L1309 428.9 L1311.2 426.2 L1312.9 422.9 L1315.1 424.5 L1318.4 424.5 L1320.1 431.7 L1321.2 436.1 L1323.4 436.7 L1324.5 442.8 L1327.3 443 L1328.4 437.8 L1333.9 436.7 L1339.4 434.5 L1341.1 433 L1342.5 434.5 L1343.3 444.4 L1345 438.9 L1346.1 445 L1352.7 446.3 L1359.4 447 L1362.1 448.8 L1362.9 454.4 L1367.7 454.7 L1368.8 460.5 L1369.9 467.1 L1373.2 466.9 L1373.7 461 L1377.6 460.5 L1378.4 466 L1383.7 466.9 L1392.5 466.2 L1399.7 465.1 L1400.8 458.8 L1406.9 458.8 L1408 465.8 L1416.9 466.6 L1424.6 465.8 L1431.3 466 L1431.8 460.7 L1433.3 460.5 L1434.4 466.9 L1437.9 466.6 L1439 460.5 L1439.9 459.9" fill="none" stroke="#73bf69" stroke-width="1.25"/><path d="M1443 461 L1451.3 461.4 L1452.2 466.9 L1457.4 467.1 L1458.5 460.5 L1460.1 458.8 L1464 459.4 L1469.5 457.4 L1471.7 459.4 L1472.8 466 L1474 466 L1475.1 459.9 L1478.9 460.5 L1479.8 454.4 L1481.7 453.3 L1485.6 456 L1491.7 455.8 L1492.8 461.8 L1498.3 461 L1499.4 456.6 L1502.7 456 L1503.8 450 L1507.7 449.2 L1508.8 454.4 L1509.9 448.5 L1513.2 450 L1521 447.7 L1522.6 443.3 L1524.3 443 L1527.6 444.8 L1532 444.4 L1533.1 443.6 L1537 445.5 L1538.1 450.5 L1542 451.1 L1543.1 455.8 L1544.8 455.2 L1545.9 449.4 L1547 455.2 L1553.1 456.6 L1554.7 451.6 L1555.8 456.6 L1563 456.3 L1564.1 452.7 L1570.8 449.4 L1575.2 447.7 L1576.3 442.2 L1577.9 441.7 L1579.6 447.7 L1586.2 446.1 L1587.4 444.8 L1588.5 451.6 L1591.2 451.6 L1592 443.9 L1596.2 442.5 L1597.3 448.8 L1599 441.1 L1600.1 449.4 L1605.1 449.2 L1608.4 452.2 L1610 459.4 L1613.9 460.5 L1615 454.7 L1615.9 454.4 L1615.9 473.3 L1443 473.3 Z" fill="#42242a"/><path d="M1443 461 L1451.3 461.4 L1452.2 466.9 L1457.4 467.1 L1458.5 460.5 L1460.1 458.8 L1464 459.4 L1469.5 457.4 L1471.7 459.4 L1472.8 466 L1474 466 L1475.1 459.9 L1478.9 460.5 L1479.8 454.4 L1481.7 453.3 L1485.6 456 L1491.7 455.8 L1492.8 461.8 L1498.3 461 L1499.4 456.6 L1502.7 456 L1503.8 450 L1507.7 449.2 L1508.8 454.4 L1509.9 448.5 L1513.2 450 L1521 447.7 L1522.6 443.3 L1524.3 443 L1527.6 444.8 L1532 444.4 L1533.1 443.6 L1537 445.5 L1538.1 450.5 L1542 451.1 L1543.1 455.8 L1544.8 455.2 L1545.9 449.4 L1547 455.2 L1553.1 456.6 L1554.7 451.6 L1555.8 456.6 L1563 456.3 L1564.1 452.7 L1570.8 449.4 L1575.2 447.7 L1576.3 442.2 L1577.9 441.7 L1579.6 447.7 L1586.2 446.1 L1587.4 444.8 L1588.5 451.6 L1591.2 451.6 L1592 443.9 L1596.2 442.5 L1597.3 448.8 L1599 441.1 L1600.1 449.4 L1605.1 449.2 L1608.4 452.2 L1610 459.4 L1613.9 460.5 L1615 454.7 L1615.9 454.4" fill="none" stroke="#f2495c" stroke-width="1.25"/></svg><div class="stt" style="left:12.3px;top:43.7px">/account</div><div class="stv" style="left:13.1px;top:63.6px;color:#f2495c">8.33</div><div class="stt" style="left:188.2px;top:43.7px">/cart</div><div class="stv" style="left:189px;top:63.6px;color:#73bf69">0</div><div class="stt" style="left:364.2px;top:43.7px">/fastcache</div><div class="stv" style="left:365px;top:63.6px;color:#f2495c">4.94</div><div class="stt" style="left:12.3px;top:157.7px">/health</div><div class="stv" style="left:13.1px;top:177.6px;color:#73bf69">1.22</div><div class="stt" style="left:188.2px;top:157.7px">/login</div><div class="stv" style="left:189px;top:177.6px;color:#73bf69">2.94</div><div class="stt" style="left:364.2px;top:157.7px">/payment</div><div class="stv" style="left:365px;top:177.6px;color:#f2495c">4.17</div></div>
<div class="panel" style="left:17px;top:483px;width:729px;height:448px"><div class="ptitle" style="letter-spacing:0">Top 10 Highest Endpoint Latencies Over Last Minute</div><div style="position:absolute;left:0;top:32px;width:727px;height:33px;background:#22252b"></div><div style="position:absolute;left:241px;top:32px;width:1px;height:382px;background:#2c2f35"></div><div style="position:absolute;left:484px;top:32px;width:1px;height:382px;background:#2c2f35"></div><div style="position:absolute;left:0;top:99px;width:727px;height:1px;background:#25282d"></div><div style="position:absolute;left:0;top:134px;width:727px;height:1px;background:#25282d"></div><div style="position:absolute;left:0;top:169px;width:727px;height:1px;background:#25282d"></div><div style="position:absolute;left:0;top:204px;width:727px;height:1px;background:#25282d"></div><div style="position:absolute;left:0;top:239px;width:727px;height:1px;background:#25282d"></div><div style="position:absolute;left:0;top:274px;width:727px;height:1px;background:#25282d"></div><div style="position:absolute;left:0;top:309px;width:727px;height:1px;background:#25282d"></div><div style="position:absolute;left:0;top:344px;width:727px;height:1px;background:#25282d"></div><div style="position:absolute;left:0;top:379px;width:727px;height:1px;background:#25282d"></div><div class="th" style="left:6.2px;top:38px;letter-spacing:.1px">HTTP Method</div><div class="th" style="left:248.3px;top:38px;letter-spacing:.1px">Endpoint</div><div class="th r" style="left:485px;width:231.9px;top:38px;letter-spacing:.2px">Latency (ms)</div><div class="td m" style="left:6.2px;top:72px;display:inline-block;transform-origin:0 50%;transform:scaleX(0.9243)">GET</div><div class="td e" style="left:248.3px;top:72px;letter-spacing:0.572px">/login</div><div class="td r" style="left:485px;width:227.2px;top:72px;letter-spacing:0.163px">69.6</div><div class="td m" style="left:6.2px;top:107px;display:inline-block;transform-origin:0 50%;transform:scaleX(0.9243)">GET</div><div class="td e" style="left:248.3px;top:107px;letter-spacing:0.572px">/account</div><div class="td r" style="left:485px;width:227.2px;top:107px;letter-spacing:0.163px">53.3</div><div class="td m" style="left:6.2px;top:142px;display:inline-block;transform-origin:0 50%;transform:scaleX(0.9243)">GET</div><div class="td e" style="left:248.3px;top:142px;letter-spacing:0.414px">/payment</div><div class="td r" style="left:485px;width:227.2px;top:142px;letter-spacing:0.163px">51.2</div><div class="td m" style="left:6.2px;top:177px;display:inline-block;transform-origin:0 50%;transform:scaleX(0.9471)">POST</div><div class="td e" style="left:248.3px;top:177px;letter-spacing:0.572px">/account</div><div class="td r" style="left:485px;width:227.2px;top:177px;letter-spacing:0.163px">45.1</div><div class="td m" style="left:6.2px;top:212px;display:inline-block;transform-origin:0 50%;transform:scaleX(0.9471)">POST</div><div class="td e" style="left:248.3px;top:212px;letter-spacing:0.414px">/payment</div><div class="td r" style="left:485px;width:227.2px;top:212px;letter-spacing:0.163px">32.7</div><div class="td m" style="left:6.2px;top:247px;display:inline-block;transform-origin:0 50%;transform:scaleX(0.9471)">POST</div><div class="td e" style="left:248.3px;top:247px;letter-spacing:0.572px">/login</div><div class="td r" style="left:485px;width:227.2px;top:247px;letter-spacing:0.163px">25.3</div><div class="td m" style="left:6.2px;top:282px;display:inline-block;transform-origin:0 50%;transform:scaleX(0.9471)">POST</div><div class="td e" style="left:248.3px;top:282px;letter-spacing:0.549px">/fastcache</div><div class="td r" style="left:485px;width:227.2px;top:282px;letter-spacing:0.163px">21.7</div><div class="td m" style="left:6.2px;top:317px;display:inline-block;transform-origin:0 50%;transform:scaleX(0.9236)">DELETE</div><div class="td e" style="left:248.3px;top:317px;letter-spacing:0.549px">/fastcache</div><div class="td r" style="left:485px;width:227.2px;top:317px;letter-spacing:0.163px">20.8</div><div class="td m" style="left:6.2px;top:352px;display:inline-block;transform-origin:0 50%;transform:scaleX(0.9471)">POST</div><div class="td e" style="left:248.3px;top:352px;letter-spacing:0.509px">/health</div><div class="td r" style="left:485px;width:227.2px;top:352px;letter-spacing:0.163px">18.8</div><div class="td m" style="left:6.2px;top:387px;display:inline-block;transform-origin:0 50%;transform:scaleX(0.9236)">DELETE</div><div class="td e" style="left:248.3px;top:387px;letter-spacing:0.834px">/cart</div><div class="td r" style="left:485px;width:227.2px;top:387px;letter-spacing:0.163px">12.0</div></div>
<div class="panel" style="left:754px;top:483px;width:863px;height:448px"><div class="ptitle" style="letter-spacing:.04px">All Endpoint Latencies in ms (Last 10 mins)</div><svg class="chart" width="863" height="448" viewBox="754 483 863 448"><defs><clipPath id="c2"><rect x="786.2" y="541" width="795.8" height="220.8"/></clipPath><clipPath id="c2l"><rect x="786.2" y="541" width="428.1" height="220.8"/></clipPath><clipPath id="c2r"><rect x="1214.3" y="541" width="367.7" height="220.8"/></clipPath><linearGradient id="lo" gradientUnits="userSpaceOnUse" x1="0" y1="706" x2="0" y2="762"><stop offset="0" stop-color="#6b656d"/><stop offset="1" stop-color="#74635e"/></linearGradient></defs><path d="M851.5 541 V765.8 M931.5 541 V765.8 M1010.5 541 V765.8 M1090.5 541 V765.8 M1170.5 541 V765.8 M1249.5 541 V765.8 M1329.5 541 V765.8 M1409.5 541 V765.8 M1488.5 541 V765.8 M1568.5 541 V765.8 M782.2 737.5 H1582 M782.2 706.5 H1582 M782.2 676.5 H1582 M782.2 645.5 H1582 M782.2 615.5 H1582 M782.2 584.5 H1582 M782.2 553.5 H1582" stroke="#ccccdc" stroke-opacity=".06" stroke-width="1" fill="none"/><g clip-path="url(#c2)" stroke-linejoin="round"><path d="M786.2 577.6 L803.9 577.6 L821.5 575.7 L833.8 574.9 L898.9 573.6 L901.7 569.5 L945.1 569.5 L984.5 569.8 L986.4 573 L1010.3 572.5 L1013 574.4 L1047 573.6 L1052.4 574.9 L1090.4 574.4 L1162.4 574.9 L1170 575.2 L1212.1 575.5 L1214.8 569.2 L1248.8 568.4 L1289.5 567.6 L1308.5 567.6 L1311.2 562.2 L1330.2 561.1 L1409 562.2 L1441.6 561.3 L1520.4 560.3 L1525.8 560.8 L1529 563.2 L1532.6 561.3 L1550.2 561.6 L1555.7 561.1 L1582 561.3 L1582 761.8 L786.2 761.8 Z" fill="#48482a"/><path d="M786.2 596.1 L829.7 596.1 L832.4 593.4 L888.1 593.7 L890.8 596.9 L903 597.5 L908.4 598.8 L928.8 599.4 L983.1 600.5 L986.4 602.9 L1026.6 601.8 L1042.3 601 L1045.1 592.8 L1090.4 592.6 L1135.2 592 L1162.4 591.5 L1170 592 L1194.4 593.7 L1212.1 593.7 L1214.8 589.9 L1248.8 588.5 L1292.2 589.3 L1308.5 588.5 L1311.2 585 L1365.5 585 L1369.6 588 L1400.9 588.2 L1441.6 587.1 L1489.1 588.2 L1528.5 588.5 L1533.9 587.4 L1550.2 588 L1582 589 L1582 761.8 L786.2 761.8 Z" fill="#4d544a"/><path d="M786.2 683.8 L850.1 683.3 L854.1 682.2 L866.4 681.9 L870.4 680.6 L896.2 680.8 L901.7 681.9 L928.8 682.2 L972.3 682.2 L976.3 680.6 L984.5 680.6 L987.2 683.3 L1015.7 683.3 L1019.8 681.7 L1052.4 681.7 L1056.5 684.4 L1064.6 684.1 L1067.3 683.3 L1090.4 683 L1094.5 680 L1162.4 680 L1170 680 L1186.3 680.3 L1189 681.7 L1213.5 681.7 L1214.3 619.5 L1233.8 619.5 L1236.5 622.5 L1239.3 622.5 L1242 628.7 L1250.1 628.7 L1252.8 625.4 L1255.6 625.4 L1257.5 628.7 L1330.2 628.7 L1332.1 630.3 L1376.4 630.3 L1379.7 632.2 L1441.6 632.2 L1443.8 629.8 L1457.3 629.8 L1460.1 634.1 L1464.7 634.7 L1470.1 637.9 L1489.1 638.2 L1491.8 636 L1494.6 636 L1497.3 638.5 L1502.7 641.2 L1514.9 641.5 L1517.6 636 L1531.2 635.5 L1533.9 632.8 L1538 630.6 L1567.9 630.3 L1570.6 624.6 L1574.1 624.6 L1576.6 628.2 L1582 628.2 L1582 761.8 L786.2 761.8 Z" fill="#48565e" clip-path="url(#c2r)"/><path d="M786.2 639.3 L836.5 638.7 L928.8 640.1 L1010.3 639.8 L1018.4 638.5 L1090.4 638.2 L1162.4 638.7 L1170 638.7 L1212.1 639.3 L1248.8 638.7 L1330.2 639.8 L1365.5 640.4 L1369.6 644.2 L1381.8 644.2 L1384.6 639.8 L1455.2 640.1 L1459.2 643.1 L1489.1 642.8 L1514.9 643.6 L1519 645 L1529.9 644.5 L1533.9 642 L1550.2 641.5 L1561.1 639 L1582 639.3 L1582 761.8 L786.2 761.8 Z" fill="#546664" clip-path="url(#c2l)"/><path d="M786.2 639.3 L836.5 638.7 L928.8 640.1 L1010.3 639.8 L1018.4 638.5 L1090.4 638.2 L1162.4 638.7 L1170 638.7 L1212.1 639.3 L1248.8 638.7 L1330.2 639.8 L1365.5 640.4 L1369.6 644.2 L1381.8 644.2 L1384.6 639.8 L1455.2 640.1 L1459.2 643.1 L1489.1 642.8 L1514.9 643.6 L1519 645 L1529.9 644.5 L1533.9 642 L1550.2 641.5 L1561.1 639 L1582 639.3 L1582 761.8 L786.2 761.8 Z" fill="#425c6c" clip-path="url(#c2r)"/><path d="M786.2 683.8 L850.1 683.3 L854.1 682.2 L866.4 681.9 L870.4 680.6 L896.2 680.8 L901.7 681.9 L928.8 682.2 L972.3 682.2 L976.3 680.6 L984.5 680.6 L987.2 683.3 L1015.7 683.3 L1019.8 681.7 L1052.4 681.7 L1056.5 684.4 L1064.6 684.1 L1067.3 683.3 L1090.4 683 L1094.5 680 L1162.4 680 L1170 680 L1186.3 680.3 L1189 681.7 L1213.5 681.7 L1214.3 619.5 L1233.8 619.5 L1236.5 622.5 L1239.3 622.5 L1242 628.7 L1250.1 628.7 L1252.8 625.4 L1255.6 625.4 L1257.5 628.7 L1330.2 628.7 L1332.1 630.3 L1376.4 630.3 L1379.7 632.2 L1441.6 632.2 L1443.8 629.8 L1457.3 629.8 L1460.1 634.1 L1464.7 634.7 L1470.1 637.9 L1489.1 638.2 L1491.8 636 L1494.6 636 L1497.3 638.5 L1502.7 641.2 L1514.9 641.5 L1517.6 636 L1531.2 635.5 L1533.9 632.8 L1538 630.6 L1567.9 630.3 L1570.6 624.6 L1574.1 624.6 L1576.6 628.2 L1582 628.2 L1582 761.8 L786.2 761.8 Z" fill="#3e5a6a" clip-path="url(#c2l)"/><path d="M786.2 710.2 L839.2 709.6 L843.3 707.7 L888.1 708 L890.8 709.1 L950.5 708.8 L953.3 710.4 L1042.9 709.9 L1047 706.1 L1090.4 703.9 L1135.2 702.6 L1162.4 702.3 L1170 702.6 L1186.3 702.8 L1189 703.9 L1213.5 703.4 L1216.2 699 L1254.2 699 L1257.5 703.9 L1305.8 702.8 L1309.9 699 L1409 698.2 L1509.5 697.7 L1582 696.6 L1582 761.8 L786.2 761.8 Z" fill="#505868"/><path d="M786.2 687.6 L809.3 687.1 L811.2 711 L811.2 761.8 L811.2 761.8 L786.2 761.8 Z" fill="#5f7d73"/><path d="M786.2 706.5 L809.3 706.5 L811.2 711 L942.4 710.7 L945.1 712.3 L1042.9 712.1 L1045.1 706.9 L1090.4 706.6 L1162.4 706.9 L1170 707.2 L1191.7 707.7 L1194.4 709.6 L1228.4 708.8 L1231.1 707.7 L1305.8 708 L1309.9 706.1 L1509.5 706.4 L1512.2 703.4 L1555.7 703.1 L1559.7 700.7 L1582 700.7 L1582 761.8 L786.2 761.8 Z" fill="url(#lo)"/></g><path d="M851.5 541 V765.8 M931.5 541 V765.8 M1010.5 541 V765.8 M1090.5 541 V765.8 M1170.5 541 V765.8 M1249.5 541 V765.8 M1329.5 541 V765.8 M1409.5 541 V765.8 M1488.5 541 V765.8 M1568.5 541 V765.8 M782.2 737.5 H1582 M782.2 706.5 H1582 M782.2 676.5 H1582 M782.2 645.5 H1582 M782.2 615.5 H1582 M782.2 584.5 H1582 M782.2 553.5 H1582" stroke="#ccccdc" stroke-opacity=".07" stroke-width="1" fill="none"/><g clip-path="url(#c2)" stroke-linejoin="round" fill="none" stroke-width="1"><path d="M786.2 737.3 L1162.4 736.5 L1170 736.5 L1582 736" stroke="#d08040" stroke-opacity="0.15"/><path d="M786.2 722.4 L1162.4 721.9 L1170 721.9 L1381.8 721.9 L1384.6 718.6 L1441.6 717.5 L1463.3 716.4 L1466 718.6 L1514.9 718.6 L1517.6 708.8 L1555.7 707.7 L1558.4 704.5 L1582 703.9" stroke="#c15c17" stroke-opacity="0.28"/><path d="M786.2 712.9 L969.6 714.3 L979.1 712.9 L981 730.5 L1042.9 730 L1045.6 728.9 L1162.4 729.5 L1170 729.5 L1582 729.5" stroke="#e24d42" stroke-opacity="0.22"/><path d="M1090.4 736 L1091.8 726.5 L1162.4 727.3 L1170 727.3 L1582 725.7" stroke="#8a9a78" stroke-opacity="0.3"/><path d="M786.2 736.5 L1162.4 736 L1170 736 L1308.5 736 L1309.9 722.4 L1582 721.9" stroke="#b8a040" stroke-opacity="0.2"/><path d="M786.2 703.9 L950.5 703.4 L956 700.1 L984.5 700.1 L986.4 704.7 L1042.9 705.3 L1045.6 708.8 L1162.4 709.4 L1170 709.4 L1305.8 710.2 L1582 710.4" stroke="#b877d9" stroke-opacity="0.3"/><path d="M786.2 710.2 L839.2 709.6 L843.3 707.7 L888.1 708 L890.8 709.1 L950.5 708.8 L953.3 710.4 L1042.9 709.9 L1047 706.1 L1090.4 703.9 L1135.2 702.6 L1162.4 702.3 L1170 702.6 L1186.3 702.8 L1189 703.9 L1213.5 703.4 L1216.2 699 L1254.2 699 L1257.5 703.9 L1305.8 702.8 L1309.9 699 L1409 698.2 L1509.5 697.7 L1582 696.6" stroke="#8a1c28" stroke-opacity="0.85"/><path d="M786.2 683.8 L850.1 683.3 L854.1 682.2 L866.4 681.9 L870.4 680.6 L896.2 680.8 L901.7 681.9 L928.8 682.2 L972.3 682.2 L976.3 680.6 L984.5 680.6 L987.2 683.3 L1015.7 683.3 L1019.8 681.7 L1052.4 681.7 L1056.5 684.4 L1064.6 684.1 L1067.3 683.3 L1090.4 683 L1094.5 680 L1162.4 680 L1170 680 L1186.3 680.3 L1189 681.7 L1213.5 681.7 L1214.3 619.5 L1233.8 619.5 L1236.5 622.5 L1239.3 622.5 L1242 628.7 L1250.1 628.7 L1252.8 625.4 L1255.6 625.4 L1257.5 628.7 L1330.2 628.7 L1332.1 630.3 L1376.4 630.3 L1379.7 632.2 L1441.6 632.2 L1443.8 629.8 L1457.3 629.8 L1460.1 634.1 L1464.7 634.7 L1470.1 637.9 L1489.1 638.2 L1491.8 636 L1494.6 636 L1497.3 638.5 L1502.7 641.2 L1514.9 641.5 L1517.6 636 L1531.2 635.5 L1533.9 632.8 L1538 630.6 L1567.9 630.3 L1570.6 624.6 L1574.1 624.6 L1576.6 628.2 L1582 628.2" stroke="#1c5a9e" stroke-opacity="1"/><path d="M786.2 639.3 L836.5 638.7 L928.8 640.1 L1010.3 639.8 L1018.4 638.5 L1090.4 638.2 L1162.4 638.7 L1170 638.7 L1212.1 639.3 L1248.8 638.7 L1330.2 639.8 L1365.5 640.4 L1369.6 644.2 L1381.8 644.2 L1384.6 639.8 L1455.2 640.1 L1459.2 643.1 L1489.1 642.8 L1514.9 643.6 L1519 645 L1529.9 644.5 L1533.9 642 L1550.2 641.5 L1561.1 639 L1582 639.3" stroke="#6494c4" stroke-opacity="1"/><path d="M786.2 596.1 L829.7 596.1 L832.4 593.4 L888.1 593.7 L890.8 596.9 L903 597.5 L908.4 598.8 L928.8 599.4 L983.1 600.5 L986.4 602.9 L1026.6 601.8 L1042.3 601 L1045.1 592.8 L1090.4 592.6 L1135.2 592 L1162.4 591.5 L1170 592 L1194.4 593.7 L1212.1 593.7 L1214.8 589.9 L1248.8 588.5 L1292.2 589.3 L1308.5 588.5 L1311.2 585 L1365.5 585 L1369.6 588 L1400.9 588.2 L1441.6 587.1 L1489.1 588.2 L1528.5 588.5 L1533.9 587.4 L1550.2 588 L1582 589" stroke="#4a86c0" stroke-opacity="1"/><path d="M786.2 577.6 L803.9 577.6 L821.5 575.7 L833.8 574.9 L898.9 573.6 L901.7 569.5 L945.1 569.5 L984.5 569.8 L986.4 573 L1010.3 572.5 L1013 574.4 L1047 573.6 L1052.4 574.9 L1090.4 574.4 L1162.4 574.9 L1170 575.2 L1212.1 575.5 L1214.8 569.2 L1248.8 568.4 L1289.5 567.6 L1308.5 567.6 L1311.2 562.2 L1330.2 561.1 L1409 562.2 L1441.6 561.3 L1520.4 560.3 L1525.8 560.8 L1529 563.2 L1532.6 561.3 L1550.2 561.6 L1555.7 561.1 L1582 561.3" stroke="#d8bf28" stroke-opacity="1"/><path d="M786.2 687.6 L809.3 687.1 L811.2 711 L942.4 710.7 L945.1 712.3 L1042.9 712.1 L1045.1 706.9 L1090.4 706.6 L1162.4 706.9 L1170 707.2 L1191.7 707.7 L1194.4 709.6 L1228.4 708.8 L1231.1 707.7 L1305.8 708 L1309.9 706.1 L1509.5 706.4 L1512.2 703.4 L1555.7 703.1 L1559.7 700.7 L1582 700.7" stroke="#bedab2" stroke-opacity="1" stroke-width="1.3"/></g><g class="ax"><text x="777" y="740.6" text-anchor="end">10</text><text x="777" y="709.6" text-anchor="end">20</text><text x="777" y="679.6" text-anchor="end">30</text><text x="777" y="648.6" text-anchor="end">40</text><text x="777" y="618.6" text-anchor="end">50</text><text x="777" y="587.6" text-anchor="end">60</text><text x="777" y="556.6" text-anchor="end">70</text><text x="851" y="779.5" text-anchor="middle">08:49:30</text><text x="930.7" y="779.5" text-anchor="middle">08:50:00</text><text x="1010.3" y="779.5" text-anchor="middle">08:50:30</text><text x="1090" y="779.5" text-anchor="middle">08:51:00</text><text x="1169.7" y="779.5" text-anchor="middle">08:51:30</text><text x="1249.3" y="779.5" text-anchor="middle">08:52:00</text><text x="1329" y="779.5" text-anchor="middle">08:52:30</text><text x="1408.7" y="779.5" text-anchor="middle">08:53:00</text><text x="1488.4" y="779.5" text-anchor="middle">08:53:30</text><text x="1568" y="779.5" text-anchor="middle">08:54:00</text></g></svg><i class="dash" style="left:23.6px;top:310px;background:#73BF69"></i><span class="lg" style="left:46.2px;top:304px;letter-spacing:0.027px">{http_method=&quot;DELETE&quot;, http_target=&quot;/account&quot;}</span><i class="dash" style="left:321px;top:310px;background:#F2CC0C"></i><span class="lg" style="left:342.7px;top:304px;letter-spacing:0.034px">{http_method=&quot;DELETE&quot;, http_target=&quot;/cart&quot;}</span><i class="dash" style="left:23.6px;top:332px;background:#8AB8FF"></i><span class="lg" style="left:46.2px;top:326px;letter-spacing:0.054px">{http_method=&quot;DELETE&quot;, http_target=&quot;/fastcache&quot;}</span><i class="dash" style="left:330.3px;top:332px;background:#FF780A"></i><span class="lg" style="left:352.4px;top:326px;letter-spacing:0.019px">{http_method=&quot;DELETE&quot;, http_target=&quot;/health&quot;}</span><i class="dash" style="left:23.6px;top:354px;background:#F2495C"></i><span class="lg" style="left:46.2px;top:348px;letter-spacing:0.020px">{http_method=&quot;DELETE&quot;, http_target=&quot;/payment&quot;}</span><i class="dash" style="left:323.8px;top:354px;background:#5794F2"></i><span class="lg" style="left:345.4px;top:348px;letter-spacing:0.101px">{http_method=&quot;GET&quot;, http_target=&quot;/account&quot;}</span><i class="dash" style="left:23.6px;top:376px;background:#B877D9"></i><span class="lg" style="left:46.2px;top:370px;letter-spacing:0.079px">{http_method=&quot;GET&quot;, http_target=&quot;/cart&quot;}</span><i class="dash" style="left:278px;top:376px;background:#705DA0"></i><span class="lg" style="left:299.6px;top:370px;letter-spacing:0.116px">{http_method=&quot;GET&quot;, http_target=&quot;/fastcache&quot;}</span><i class="dash" style="left:564.8px;top:376px;background:#37872D"></i><span class="lg" style="left:586.4px;top:370px;letter-spacing:0.068px">{http_method=&quot;GET&quot;, http_target=&quot;/health&quot;}</span><i class="dash" style="left:23.6px;top:398px;background:#FADE2A"></i><span class="lg" style="left:46.2px;top:392px;letter-spacing:0.052px">{http_method=&quot;GET&quot;, http_target=&quot;/login&quot;}</span><i class="dash" style="left:281.8px;top:398px;background:#447EBC"></i><span class="lg" style="left:303.9px;top:392px;letter-spacing:0.082px">{http_method=&quot;GET&quot;, http_target=&quot;/payment&quot;}</span><i class="dash" style="left:562px;top:398px;background:#C15C17"></i><span class="lg" style="left:583.7px;top:392px;letter-spacing:0.101px">{http_method=&quot;POST&quot;, http_target=&quot;/account&quot;}</span><i class="dash" style="left:23.6px;top:420px;background:#890F02"></i><span class="lg" style="left:46.2px;top:414px;letter-spacing:0.077px">{http_method=&quot;POST&quot;, http_target=&quot;/cart&quot;}</span><i class="dash" style="left:286px;top:420px;background:#0A437C"></i><span class="lg" style="left:307.7px;top:414px;letter-spacing:0.115px">{http_method=&quot;POST&quot;, http_target=&quot;/fastcache&quot;}</span></div>
</body></html>
